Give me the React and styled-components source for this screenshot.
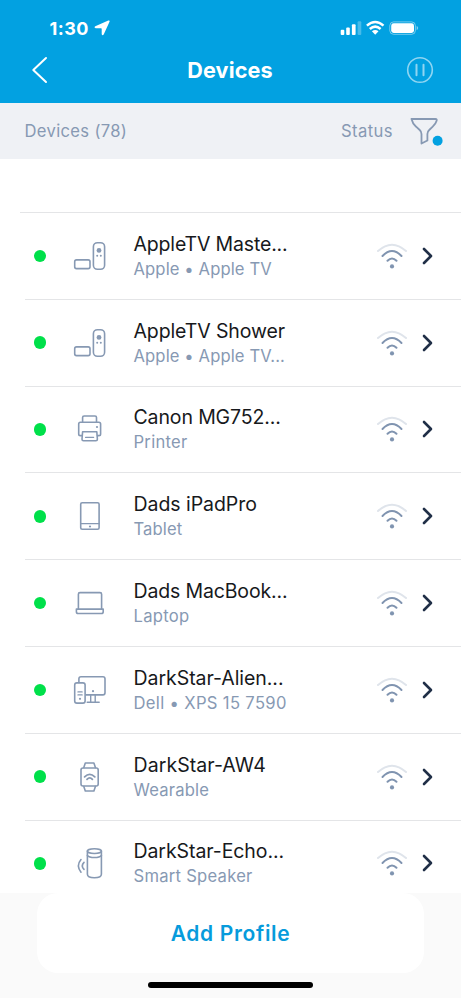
import React from "react";
import styled, { createGlobalStyle } from "styled-components";

const GlobalStyle = createGlobalStyle`
  * { box-sizing: border-box; }
  body { margin: 0; background: #fff; font-family: Inter, "Liberation Sans", sans-serif; }
`;

const Screen = styled.main`
  width: 461px;
  height: 998px;
  display: flex;
  flex-direction: column;
  overflow: hidden;
  background: #fff;
`;

const TopArea = styled.header`
  height: 103px;
  flex: none;
  background: #02a1e1;
  color: #fff;
  padding-top: 15px;
`;

const StatusBar = styled.div`
  height: 26px;
  display: flex;
  align-items: center;
  justify-content: space-between;
  padding: 0 42px 0 49.5px;
`;

const Clock = styled.div`
  display: flex;
  align-items: center;
  gap: 5px;
  font-size: 18px;
  font-weight: 700;
  letter-spacing: 0.45px;
`;

const NavBar = styled.div`
  height: 58px;
  display: grid;
  grid-template-columns: 60px 1fr 60px;
  align-items: center;
  padding: 0 11px 0 10px;
`;

const NavButton = styled.button`
  height: 40px;
  padding: 0;
  border: 0;
  background: none;
  color: inherit;
  display: flex;
  align-items: center;
  justify-content: center;
`;

const Title = styled.h1`
  margin: 0;
  text-align: center;
  font-size: 21.6px;
  font-weight: 700;
  letter-spacing: 0.15px;
`;

const FilterBar = styled.div`
  height: 55.5px;
  flex: none;
  display: flex;
  align-items: center;
  padding: 0 17px 0 24.5px;
  background: #eff1f5;
  color: #8799b3;
  font-size: 16.6px;
  letter-spacing: 0.33px;
`;

const FilterLabel = styled.span`
  margin-left: auto;
  margin-right: 14px;
  letter-spacing: 0.42px;
`;

const List = styled.section`
  flex: 1;
  min-height: 0;
  overflow: hidden;
`;

const ListSpacer = styled.div`
  height: 54.5px;
  margin-left: 20px;
  border-bottom: 1px solid #e4e5e7;
`;

const Row = styled.div`
  height: 86.8px;
  margin-left: 25px;
  border-bottom: 1px solid #e4e5e7;
  display: flex;
  align-items: center;
`;

const OnlineDot = styled.span`
  width: 12.5px;
  height: 12.5px;
  margin-left: 8.5px;
  border-radius: 50%;
  background: #00e04a;
`;

const DeviceIcon = styled.svg`
  width: 40px;
  height: 40px;
  margin-left: 24px;
  flex: none;
  fill: none;
  stroke: #8799b3;
  stroke-width: 1.6;
  stroke-linecap: round;
  stroke-linejoin: round;
`;

const Details = styled.div`
  width: 243px;
  padding-top: 2px;
  padding-left: 23.5px;
  white-space: nowrap;
`;

const DeviceName = styled.div`
  height: 25px;
  line-height: 25px;
  color: #17191c;
  font-size: 19.5px;
  letter-spacing: ${(p) => p.$spacing}px;
`;

const DeviceKind = styled.div`
  height: 25px;
  line-height: 25px;
  color: #8799b3;
  font-size: 16.6px;
  letter-spacing: ${(p) => p.$spacing}px;
`;

const SignalIcon = styled.svg`
  width: 34px;
  height: 30px;
  margin-left: 21.5px;
  flex: none;
  fill: none;
  stroke: #8094b0;
  stroke-width: 2;
  stroke-linecap: round;
`;

const Chevron = styled.svg`
  width: 14px;
  height: 20px;
  margin-left: 12.5px;
  flex: none;
  fill: none;
  stroke: #202f47;
  stroke-width: 2.6;
  stroke-linecap: round;
  stroke-linejoin: round;
`;

const Footer = styled.footer`
  height: 105px;
  flex: none;
  background: #fafafa;
  display: flex;
  flex-direction: column;
  align-items: center;
`;

const AddButton = styled.button`
  width: 387px;
  height: 80px;
  padding: 0;
  border: 0;
  border-radius: 21px;
  background: #fff;
  color: #069bdc;
  font: 600 21px Inter, "Liberation Sans", sans-serif;
  letter-spacing: 0.65px;
`;

const HomeIndicator = styled.div`
  width: 165px;
  height: 6px;
  margin-top: 9px;
  border-radius: 3px;
  background: #000;
`;

const streamer = (
  <>
    <rect x="23.4" y="6.7" width="11.2" height="26.6" rx="4" />
    <rect x="4.7" y="23.9" width="15.3" height="8.7" rx="1.8" />
    <g fill="#8799b3" stroke="none">
      <circle cx="29" cy="14.4" r="2.4" />
      <circle cx="27.2" cy="19.8" r="1" />
      <circle cx="30.8" cy="19.8" r="1" />
    </g>
  </>
);

const printer = (
  <>
    <path d="M12.6 13V8.5Q12.6 7 14.1 7H25Q26.5 7 26.5 8.5V13" />
    <path d="M11.8 26.6H10.4Q8.7 26.6 8.7 24.9V15Q8.7 13.3 10.4 13.3H28.9Q30.6 13.3 30.6 15V24.9Q30.6 26.6 28.9 26.6H27.6" />
    <path d="M12.6 22.7H26.8L27.4 30.2Q27.4 31.7 25.9 31.7H13.5Q12 31.7 12 30.2Z" />
    <path d="M15.6 28.4H23.6" strokeWidth="1.3" />
    <circle cx="27" cy="18" r="1.1" fill="#8799b3" stroke="none" />
  </>
);

const tablet = (
  <>
    <rect x="10.7" y="6.7" width="18.4" height="26.5" rx="1.5" />
    <path d="M10.7 27.6H29.1" strokeWidth="1.3" />
    <circle cx="20" cy="30.5" r="1.1" fill="#8799b3" stroke="none" />
  </>
);

const laptop = (
  <>
    <path d="M8.4 26V11.2Q8.4 9.6 10 9.6H30Q31.6 9.6 31.6 11.2V26" />
    <path d="M6.4 26.1H33.2V28.7Q33.2 30.5 31.4 30.5H8.2Q6.4 30.5 6.4 28.7Z" />
  </>
);

const desktop = (
  <>
    <path d="M8.9 12.5V8.8Q8.9 6.7 11 6.7H32.9Q35 6.7 35 8.8V22.8Q35 24.9 32.9 24.9H16" />
    <rect x="4.7" y="12.9" width="10.4" height="20.2" rx="2.2" />
    <path d="M20.7 25.2V32M25.2 25.2V32M17.2 32.2H29.2M8 21.9H12.1M8 24.9H12.1" strokeWidth="1.4" />
    <g fill="#8799b3" stroke="none">
      <circle cx="10" cy="28.8" r="1.1" />
      <circle cx="23" cy="21.2" r="1.1" />
    </g>
  </>
);

const watch = (
  <>
    <rect x="11" y="11" width="17.2" height="18" rx="2" />
    <path d="M13.8 10.6L15.3 6H23.9L25.4 10.6M13.8 29.4L15.3 34H23.9L25.4 29.4" />
    <path d="M14.6 19.9Q19.7 14.8 24.8 19.9M17 22.3Q19.7 19.4 22.4 22.3" strokeWidth="1.8" />
  </>
);

const speaker = (
  <>
    <ellipse cx="24.4" cy="8.1" rx="7" ry="2.4" />
    <path d="M17.4 8.1V31.3Q17.4 34.7 24.4 34.7Q31.4 34.7 31.4 31.3V8.1" />
    <path d="M17.4 12.4Q19 14.5 24.4 14.5Q29.8 14.5 31.4 12.4" />
    <path d="M11 16.6Q5.8 22.8 11 29.2M14 19.4Q10.6 22.8 14 26.4" />
  </>
);

const devices = [
  { name: "AppleTV Maste...", kind: "Apple • Apple TV", icon: streamer, ns: -0.17, ks: 0.12 },
  { name: "AppleTV Shower", kind: "Apple • Apple TV...", icon: streamer, ns: -0.12, ks: 0.12 },
  { name: "Canon MG752...", kind: "Printer", icon: printer, ns: -0.13, ks: 0.27 },
  { name: "Dads iPadPro", kind: "Tablet", icon: tablet, ns: -0.05, ks: 0.12 },
  { name: "Dads MacBook...", kind: "Laptop", icon: laptop, ns: -0.15, ks: 0.3 },
  { name: "DarkStar-Alien...", kind: "Dell • XPS 15 7590", icon: desktop, ns: -0.05, ks: 0.34 },
  { name: "DarkStar-AW4", kind: "Wearable", icon: watch, ns: 0.07, ks: 0.18 },
  { name: "DarkStar-Echo...", kind: "Smart Speaker", icon: speaker, ns: -0.08, ks: 0.26 },
];

function DeviceRow({ device }) {
  return (
    <Row>
      <OnlineDot />
      <DeviceIcon viewBox="0 0 40 40">{device.icon}</DeviceIcon>
      <Details>
        <DeviceName $spacing={device.ns}>{device.name}</DeviceName>
        <DeviceKind $spacing={device.ks}>{device.kind}</DeviceKind>
      </Details>
      <SignalIcon viewBox="0 0 34 30">
        <path d="M3 10Q17 -2.6 31 10" stroke="#dfe4eb" />
        <path d="M7.5 15Q17 5.2 26.5 15M12.5 19.8Q17 15 21.5 19.8" />
        <circle cx="17" cy="25.4" r="2.1" fill="#8094b0" stroke="none" />
      </SignalIcon>
      <Chevron viewBox="0 0 14 20">
        <path d="M3 3L10 10L3 17" />
      </Chevron>
    </Row>
  );
}

export default function App() {
  return (
    <Screen>
      <GlobalStyle />
      <TopArea>
        <StatusBar>
          <Clock>
            1:30
            <svg width="16" height="16" viewBox="0 0 16 16" fill="#fff">
              <path d="M14.3.6Q16.2 0 15.4 1.9L9.7 14.5Q8.4 16.2 7.7 14.3V8.8Q7.7 8.2 7 8.2H1.7Q-.4 7.6 1.3 6.2Z" />
            </svg>
          </Clock>
          <svg width="79" height="16" viewBox="0 0 79 16" fill="#fff">
            <rect x="0.7" y="9.7" width="3.6" height="5.2" rx="1" />
            <rect x="6.2" y="7.4" width="3.6" height="7.5" rx="1" />
            <rect x="11.9" y="4.2" width="3.7" height="10.7" rx="1" />
            <rect x="17.6" y="1.3" width="3.7" height="13.6" rx="1" opacity=".28" />
            <g fill="none" stroke="#fff" strokeWidth="2.5">
              <path d="M26.9 5.6Q35.2 -1.5 43.5 5.6" />
              <path d="M29.8 9Q35.2 4.2 40.6 9" />
            </g>
            <path d="M31.9 11.3Q35.2 8.6 38.5 11.3L35.2 14.7Z" />
            <rect x="49.8" y="1.9" width="25.6" height="12.4" rx="3.8" fill="none" stroke="#fff" opacity=".45" />
            <rect x="51.2" y="3.3" width="22.8" height="9.6" rx="2.4" />
            <path d="M76.6 6Q78.2 6.7 78.2 8.1Q78.2 9.5 76.6 10.2Z" opacity=".5" />
          </svg>
        </StatusBar>
        <NavBar>
          <NavButton aria-label="Back">
            <svg width="18" height="28" viewBox="0 0 18 28" fill="none" stroke="#fff" strokeWidth="2" strokeLinecap="round" strokeLinejoin="round">
              <path d="M15 2L2.3 14L15 26" />
            </svg>
          </NavButton>
          <Title>Devices</Title>
          <NavButton aria-label="Pause">
            <svg width="28" height="28" viewBox="0 0 28 28" fill="none" stroke="#8fd5f2" strokeWidth="1.6" strokeLinecap="round">
              <circle cx="14" cy="14" r="12.3" />
              <path d="M10.5 8.8V19.2M17.5 8.8V19.2" strokeWidth="2" />
            </svg>
          </NavButton>
        </NavBar>
      </TopArea>
      <FilterBar>
        <span>Devices (78)</span>
        <FilterLabel>Status</FilterLabel>
        <svg width="37" height="34" viewBox="0 0 37 34" fill="none">
          <path d="M4.5 5H28.5Q30.3 5 29.6 6.7Q28.7 9.9 25.7 12.7L22.2 16Q20.4 17.6 20.4 20V26.5L14.5 29.5V20Q14.5 17.6 12.7 16L9.1 12.7Q5.5 9.6 4.5 5Z" stroke="#8799b3" strokeWidth="1.8" strokeLinejoin="round" />
          <circle cx="30.6" cy="26.7" r="5" fill="#02a1e1" />
        </svg>
      </FilterBar>
      <List>
        <ListSpacer />
        {devices.map((device) => (
          <DeviceRow key={device.name} device={device} />
        ))}
      </List>
      <Footer>
        <AddButton>Add Profile</AddButton>
        <HomeIndicator />
      </Footer>
    </Screen>
  );
}
